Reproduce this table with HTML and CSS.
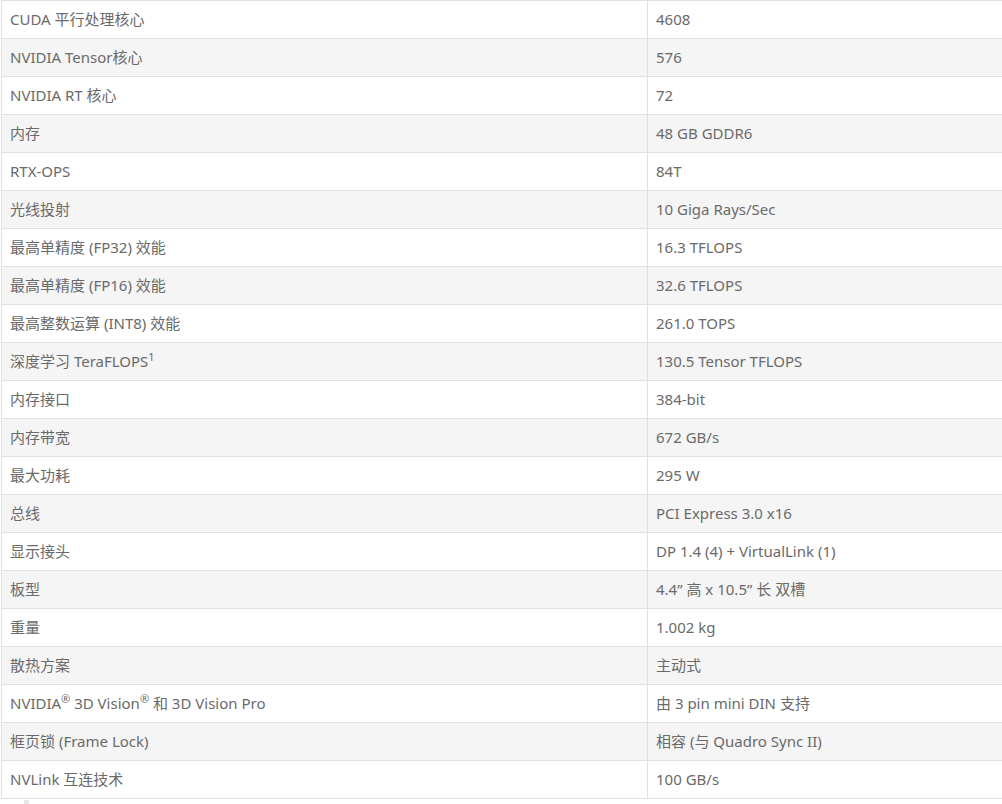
FILE: index.html
```html
<!DOCTYPE html>
<html lang="zh-CN">
<head>
<meta charset="utf-8">
<title>规格</title>
<link rel="stylesheet" href="styles.css">
</head>
<body>
<div class="spec">
  <div class="row"><div class="c k">CUDA 平行处理核心</div><div class="c v">4608</div></div>
  <div class="row"><div class="c k">NVIDIA Tensor核心</div><div class="c v">576</div></div>
  <div class="row"><div class="c k">NVIDIA RT 核心</div><div class="c v">72</div></div>
  <div class="row"><div class="c k">内存</div><div class="c v">48 GB GDDR6</div></div>
  <div class="row"><div class="c k">RTX-OPS</div><div class="c v">84T</div></div>
  <div class="row"><div class="c k">光线投射</div><div class="c v">10 Giga Rays/Sec</div></div>
  <div class="row"><div class="c k">最高单精度 (FP32) 效能</div><div class="c v">16.3 TFLOPS</div></div>
  <div class="row"><div class="c k">最高单精度 (FP16) 效能</div><div class="c v">32.6 TFLOPS</div></div>
  <div class="row"><div class="c k">最高整数运算 (INT8) 效能</div><div class="c v">261.0 TOPS</div></div>
  <div class="row"><div class="c k">深度学习 TeraFLOPS<sup>1</sup></div><div class="c v">130.5 Tensor TFLOPS</div></div>
  <div class="row"><div class="c k">内存接口</div><div class="c v">384-bit</div></div>
  <div class="row"><div class="c k">内存带宽</div><div class="c v">672 GB/s</div></div>
  <div class="row"><div class="c k">最大功耗</div><div class="c v">295 W</div></div>
  <div class="row"><div class="c k">总线</div><div class="c v">PCI Express 3.0 x16</div></div>
  <div class="row"><div class="c k">显示接头</div><div class="c v">DP 1.4 (4) + VirtualLink (1)</div></div>
  <div class="row"><div class="c k">板型</div><div class="c v">4.4” 高 x 10.5” 长 双槽</div></div>
  <div class="row"><div class="c k">重量</div><div class="c v">1.002 kg</div></div>
  <div class="row"><div class="c k">散热方案</div><div class="c v">主动式</div></div>
  <div class="row"><div class="c k">NVIDIA<sup>®</sup> 3D Vision<sup>®</sup> 和 3D Vision Pro</div><div class="c v">由 3 pin mini DIN 支持</div></div>
  <div class="row"><div class="c k">框页锁 (Frame Lock)</div><div class="c v">相容 (与 Quadro Sync II)</div></div>
  <div class="row"><div class="c k">NVLink 互连技术</div><div class="c v">100 GB/s</div></div>
</div>
<div class="below"><span class="mark"></span></div>
</body>
</html>
```
FILE: styles.css
```css
html, body {
  margin: 0;
  padding: 0;
  background: #fff;
  overflow: hidden;
}
body {
  font-family: "Noto Sans", "Noto Sans CJK SC", sans-serif;
  font-size: 15px;
  color: #6a6a6a;
}
.spec {
  margin-left: 1px;
  width: 1020px;
  border-top: 1px solid #e0e0e0;
  border-left: 1px solid #e0e0e0;
}
.row {
  display: grid;
  grid-template-columns: 646px 1fr;
  height: 38px;
  box-sizing: border-box;
  border-bottom: 1px solid #e0e0e0;
}
.row:nth-child(even) {
  background: #f5f5f5;
}
.c {
  padding-left: 8px;
  line-height: 36px;
  white-space: nowrap;
}
.k {
  border-right: 1px solid #e0e0e0;
}
sup {
  font-size: 11px;
  line-height: 0;
  vertical-align: 6px;
}
.below {
  height: 10px;
  padding-left: 24px;
  padding-top: 1px;
}
.mark {
  display: block;
  width: 5px;
  height: 10px;
  background: #e8e8e8;
}
```
